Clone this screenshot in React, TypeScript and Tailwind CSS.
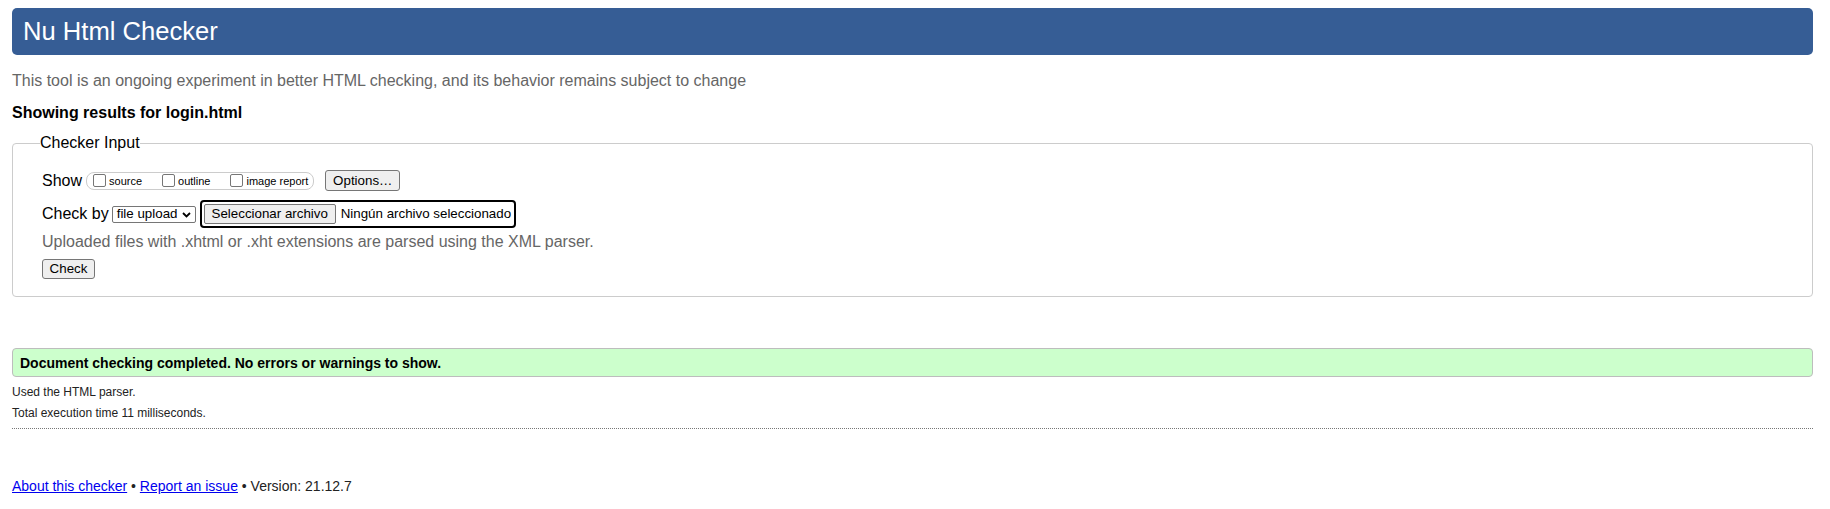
import React from "react";

function Check({ label, first }: { label: string; first?: boolean }) {
  return (
    <label className={`flex items-center ${first ? "" : "ml-[20px]"}`}>
      <span className="block h-[13px] w-[13px] rounded-[2px] border border-[#767676] bg-white" />
      <span className="ml-[3px] text-[11px] leading-[13px] translate-y-[1px]">{label}</span>
    </label>
  );
}

export default function App() {
  return (
    <div className="min-h-[509px] bg-white pl-[12px] pr-[17px] pt-[8px] font-['Liberation_Sans',Arial,sans-serif] text-black">
      <h1 className="flex h-[47px] items-center rounded-[5px] bg-[#365d95] pl-[11px] text-[25.6px] leading-none font-normal text-white">
        Nu Html Checker
      </h1>
      <p className="mt-[17px] text-[16px] leading-[18px] text-[#666666]">
        This tool is an ongoing experiment in better HTML checking, and its behavior remains subject to change
      </p>
      <p className="mt-[14px] text-[16px] font-bold leading-[18px]">Showing results for login.html</p>

      <fieldset className="mt-[12px] rounded-[4px] border border-[#cccccc] px-[27px] pb-[17px]">
        <legend className="text-[16px] leading-[18px]">Checker Input</legend>

        <div className="mt-[18px] flex h-[21px] items-center pl-[2px]">
          <span className="text-[16px] leading-[18px]">Show</span>
          <div className="ml-[4px] flex h-[18px] items-center rounded-[8px] border border-[#cccccc] pl-[6px] pr-[5px]">
            <Check label="source" first />
            <Check label="outline" />
            <Check label="image report" />
          </div>
          <button className="ml-[11px] flex h-[21px] w-[75px] items-center justify-center rounded-[3px] border border-[#767676] bg-[#efefef] text-[13.33px] leading-none">
            Options…
          </button>
        </div>

        <div className="mt-[9px] flex h-[28px] items-center pl-[2px]">
          <span className="text-[16px] leading-[18px]">Check by</span>
          <div className="ml-[3px] flex h-[17px] w-[84px] items-center justify-between rounded-[2px] border border-[#767676] bg-white pl-[4px] pr-[4px]">
            <span className="text-[13.33px] leading-none">file upload</span>
            <svg width="9" height="6" viewBox="0 0 9 6" className="mt-[1px]">
              <path d="M1 1 L4.5 4.5 L8 1" fill="none" stroke="#000" strokeWidth="1.8" />
            </svg>
          </div>
          <div className="ml-[4px] flex h-[28px] w-[316px] items-center rounded-[4px] border-2 border-black pl-[2px]">
            <span className="flex h-[20px] w-[132px] items-center justify-center rounded-[2px] border border-[#767676] bg-[#efefef] text-[13.33px] leading-none">
              Seleccionar archivo
            </span>
            <span className="ml-[5px] text-[13.33px] leading-none">Ningún archivo seleccionado</span>
          </div>
        </div>

        <p className="mt-[5px] pl-[2px] text-[16px] leading-[18px] text-[#666666]">
          Uploaded files with .xhtml or .xht extensions are parsed using the XML parser.
        </p>

        <div className="mt-[8px] pl-[2px]">
          <button className="flex h-[20px] w-[53px] items-center justify-center rounded-[3px] border border-[#767676] bg-[#efefef] text-[13.33px] leading-none">
            Check
          </button>
        </div>
      </fieldset>

      <div className="mt-[51px] flex h-[29px] items-center rounded-[4px] border border-[#bdbdbd] bg-[#ccffcc] pl-[7px] text-[14px] font-bold leading-none">
        Document checking completed. No errors or warnings to show.
      </div>
      <p className="mt-[8px] text-[12px] leading-[14px] text-[#222]">Used the HTML parser.</p>
      <p className="mt-[7px] text-[12px] leading-[14px] text-[#222]">Total execution time 11 milliseconds.</p>
      <div className="mt-[8px] border-t border-dotted border-[#777777]" />

      <p className="mt-[49px] text-[14px] leading-[16px] text-[#222]">
        <a href="#" className="text-[#0000ee] underline">About this checker</a>
        {" • "}
        <a href="#" className="text-[#0000ee] underline">Report an issue</a>
        {" • Version: 21.12.7"}
      </p>
    </div>
  );
}
